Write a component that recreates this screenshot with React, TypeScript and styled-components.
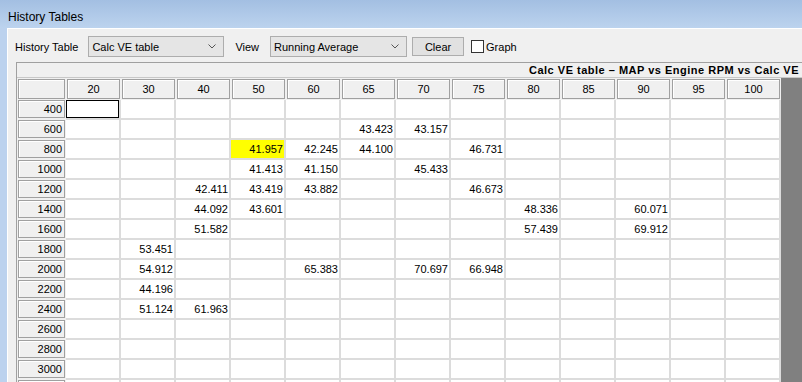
import styled, { createGlobalStyle } from 'styled-components';

const GlobalStyle = createGlobalStyle`
    html, body {
        margin: 0;
        padding: 0;
        overflow: hidden;
        background: #bcd2ee;
    }
    body {
        font-family: 'Liberation Sans', Arial, sans-serif;
        color: #000;
    }
`;

const cols = [20, 30, 40, 50, 60, 65, 70, 75, 80, 85, 90, 95, 100];
// last row is only partly visible, like the scrolled grid in the original
const rows = [400, 600, 800, 1000, 1200, 1400, 1600, 1800, 2000, 2200, 2400, 2600, 2800, 3000, 0];

const values: Record<number, Record<number, string>> = {
    600: { 65: '43.423', 70: '43.157' },
    800: { 50: '41.957', 60: '42.245', 65: '44.100', 75: '46.731' },
    1000: { 50: '41.413', 60: '41.150', 70: '45.433' },
    1200: { 40: '42.411', 50: '43.419', 60: '43.882', 75: '46.673' },
    1400: { 40: '44.092', 50: '43.601', 80: '48.336', 90: '60.071' },
    1600: { 40: '51.582', 80: '57.439', 90: '69.912' },
    1800: { 30: '53.451' },
    2000: { 30: '54.912', 60: '65.383', 70: '70.697', 75: '66.948' },
    2200: { 30: '44.196' },
    2400: { 30: '51.124', 40: '61.963' },
};

const Window = styled.div`
    width: 802px;
    height: 382px;
    display: flex;
    flex-direction: column;
    overflow: hidden;
`;

const TitleBar = styled.div`
    height: 28px;
    flex: none;
    display: flex;
    align-items: center;
    padding-left: 8px;
    padding-top: 5px;
    box-sizing: border-box;
    background: linear-gradient(#a3bfe2, #bcd3ee);
    font-size: 12px;
`;

const Frame = styled.div`
    flex: 1;
    display: flex;
    padding-left: 7px;
    min-height: 0;
`;

const Panel = styled.div`
    flex: 1;
    background: #f0f0f0;
    border-left: 1px solid #fff;
    border-top: 1px solid #fff;
    display: flex;
    flex-direction: column;
    min-width: 0;
`;

const Toolbar = styled.div`
    height: 33px;
    flex: none;
    display: flex;
    align-items: center;
    padding-left: 7px;
    padding-top: 2px;
    box-sizing: border-box;
    font-size: 11px;
`;

const Label = styled.span<{ $gap: number }>`
    margin-right: ${(p) => p.$gap}px;
    white-space: nowrap;
`;

const Combo = styled.div<{ $width: number; $gap: number }>`
    width: ${(p) => p.$width}px;
    height: 21px;
    box-sizing: border-box;
    margin-right: ${(p) => p.$gap}px;
    background: #e5e5e5;
    border: 1px solid #adadad;
    display: flex;
    align-items: center;
    justify-content: space-between;
    padding: 0 7px 0 3px;
`;

const Chevron = () => (
    <svg width="8" height="5" viewBox="0 0 8 5">
        <polyline points="0.5,0.5 4,4 7.5,0.5" fill="none" stroke="#555" strokeWidth="1" />
    </svg>
);

const ClearButton = styled.div`
    width: 52px;
    height: 19px;
    box-sizing: border-box;
    background: #e1e1e1;
    border: 1px solid #adadad;
    display: flex;
    align-items: center;
    justify-content: center;
    margin-right: 7px;
`;

const CheckBox = styled.div`
    width: 13px;
    height: 13px;
    box-sizing: border-box;
    background: #fff;
    border: 1px solid #333;
    margin-right: 2px;
`;

const Table = styled.div`
    flex: 1;
    margin-left: 8px;
    display: flex;
    flex-direction: column;
    min-height: 0;
    border-left: 1px solid #a0a0a0;
`;

const TableTitle = styled.div`
    height: 16px;
    flex: none;
    box-sizing: border-box;
    border-top: 1px solid #a0a0a0;
    border-bottom: 1px solid #c8c8c8;
    background: #f0f0f0;
    font-size: 11px;
    font-weight: bold;
    letter-spacing: 0.5px;
    text-align: right;
    padding-right: 3px;
    line-height: 15px;
    white-space: nowrap;
    overflow: hidden;
`;

const TableBody = styled.div`
    flex: 1;
    display: flex;
    min-height: 0;
    overflow: hidden;
`;

const Grid = styled.div`
    display: grid;
    grid-template-columns: 49px repeat(13, 55px);
    grid-auto-rows: 20px;
    grid-template-rows: 22px;
    flex: none;
    background: #fff;
    font-size: 11px;
`;

const Row = styled.div`
    display: contents;
`;

const HeadCell = styled.div`
    background: #f0f0f0;
    padding: 1px;
    box-sizing: border-box;
    display: flex;
`;

const HeadFace = styled.div<{ $align: 'center' | 'right' }>`
    flex: 1;
    box-sizing: border-box;
    border: 1px solid #a0a0a0;
    box-shadow: inset 1px 1px #fff;
    background: #f0f0f0;
    display: flex;
    align-items: center;
    justify-content: ${(p) => (p.$align === 'right' ? 'flex-end' : 'center')};
    padding-right: ${(p) => (p.$align === 'right' ? 2 : 0)}px;
`;

const RowHead = styled.div`
    background: #f0f0f0;
    padding: 0 1px 2px 1px;
    box-sizing: border-box;
    display: flex;
`;

const Cell = styled.div<{ $highlight?: boolean; $selected?: boolean }>`
    box-sizing: border-box;
    border-right: 2px solid #dcdcdc;
    border-bottom: 2px solid #dcdcdc;
    background: ${(p) => (p.$highlight ? '#ffff00' : '#fff')};
    box-shadow: ${(p) => (p.$selected ? 'inset 0 0 0 1px #000' : 'none')};
    display: flex;
    align-items: center;
    justify-content: flex-end;
    padding-right: 1px;
`;

const Filler = styled.div`
    flex: 1;
    background: #808080;
`;

export default function App() {
    return (
        <Window>
            <GlobalStyle />
            <TitleBar>History Tables</TitleBar>
            <Frame>
                <Panel>
                    <Toolbar>
                        <Label $gap={10}>History Table</Label>
                        <Combo $width={136} $gap={11}>
                            <span>Calc VE table</span>
                            <Chevron />
                        </Combo>
                        <Label $gap={11}>View</Label>
                        <Combo $width={137} $gap={5}>
                            <span>Running Average</span>
                            <Chevron />
                        </Combo>
                        <ClearButton>Clear</ClearButton>
                        <CheckBox />
                        <Label $gap={0}>Graph</Label>
                    </Toolbar>
                    <Table>
                        <TableTitle>Calc VE table – MAP vs Engine RPM vs Calc VE</TableTitle>
                        <TableBody>
                            <Grid>
                                <Row>
                                    <HeadCell>
                                        <HeadFace $align="center" />
                                    </HeadCell>
                                    {cols.map((c) => (
                                        <HeadCell key={c}>
                                            <HeadFace $align="center">{c}</HeadFace>
                                        </HeadCell>
                                    ))}
                                </Row>
                                {rows.map((r, i) => (
                                    <Row key={i}>
                                        <RowHead>
                                            <HeadFace $align="right">{r || ''}</HeadFace>
                                        </RowHead>
                                        {cols.map((c) => (
                                            <Cell
                                                key={c}
                                                $highlight={r === 800 && c === 50}
                                                $selected={r === 400 && c === 20}
                                            >
                                                {values[r]?.[c] ?? ''}
                                            </Cell>
                                        ))}
                                    </Row>
                                ))}
                            </Grid>
                            <Filler />
                        </TableBody>
                    </Table>
                </Panel>
            </Frame>
        </Window>
    );
}
